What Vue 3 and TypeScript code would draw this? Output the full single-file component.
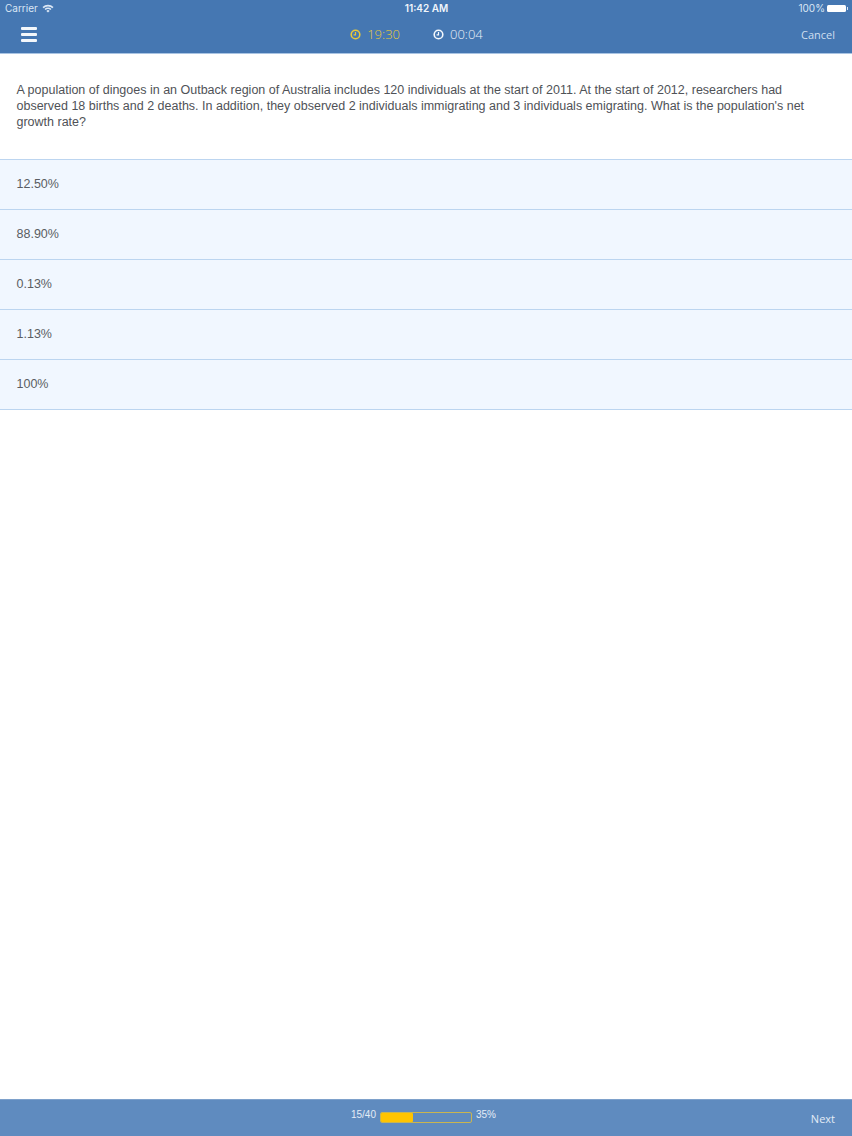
<script setup lang="ts">
const options: string[] = ['12.50%', '88.90%', '0.13%', '1.13%', '100%']
const progress = 35
</script>

<template>
  <div class="page">
    <header class="top">
      <div class="status">
        <div class="status-left">
          <span>Carrier</span>
          <svg class="wifi" width="12" height="9" viewBox="0 0 12 9">
            <path d="M0.5 3 A8 8 0 0 1 11.5 3 L10.4 4.2 A6.4 6.4 0 0 0 1.6 4.2 Z" fill="#dbe7f5" />
            <path d="M2.5 5 A5 5 0 0 1 9.5 5 L8.4 6.1 A3.4 3.4 0 0 0 3.6 6.1 Z" fill="#dbe7f5" />
            <path d="M4.4 6.9 A2.2 2.2 0 0 1 7.6 6.9 L6 8.6 Z" fill="#dbe7f5" />
          </svg>
        </div>
        <div class="clock">11:42 AM</div>
        <div class="status-right">
          <span>100%</span>
          <span class="battery"><span class="battery-cap"></span></span>
        </div>
      </div>
      <nav class="nav">
        <div class="menu"><span></span><span></span><span></span></div>
        <div class="timers">
          <div class="timer timer-gold">
            <svg width="11" height="11" viewBox="0 0 11 11">
              <circle cx="5.5" cy="5.5" r="4.3" fill="none" stroke="currentColor" stroke-width="1.6" />
              <path d="M5.5 3 V5.8 H3.6" fill="none" stroke="currentColor" stroke-width="1.2" />
            </svg>
            <span>19:30</span>
          </div>
          <div class="timer timer-white">
            <svg width="11" height="11" viewBox="0 0 11 11">
              <circle cx="5.5" cy="5.5" r="4.3" fill="none" stroke="#f4f8fc" stroke-width="1.6" />
              <path d="M5.5 3 V5.8 H3.6" fill="none" stroke="#f4f8fc" stroke-width="1.2" />
            </svg>
            <span>00:04</span>
          </div>
        </div>
        <div class="cancel">Cancel</div>
      </nav>
    </header>

    <main class="main">
      <p class="question">
        A population of dingoes in an Outback region of Australia includes 120 individuals at the start of 2011. At the start of 2012, researchers had observed 18 births and 2 deaths. In addition, they observed 2 individuals immigrating and 3 individuals emigrating. What is the population's net growth rate?
      </p>
      <ul class="options">
        <li v-for="o in options" :key="o" class="option">{{ o }}</li>
      </ul>
    </main>

    <footer class="bottom">
      <div class="progress">
        <span class="count">15/40</span>
        <div class="bar"><div class="fill" :style="{ width: progress + '%' }"></div></div>
        <span class="count">35%</span>
      </div>
      <div class="next">Next</div>
    </footer>
  </div>
</template>

<style>
body { margin: 0; background: #fff; }
</style>

<style scoped>
.page {
  width: 852px;
  height: 1136px;
  display: flex;
  flex-direction: column;
  font-family: "Liberation Sans", Arial, sans-serif;
  overflow: hidden;
  background: #fff;
}
.top {
  height: 53px;
  background: #4577b2;
  border-bottom: 1px solid #a9c4e3;
  box-sizing: content-box;
  display: flex;
  flex-direction: column;
}
.status {
  height: 16px;
  display: grid;
  grid-template-columns: 1fr auto 1fr;
  align-items: center;
  padding: 0 4px 0 5px;
  font-size: 10px;
  color: #dbe7f5;
  font-family: Inter, "Liberation Sans", sans-serif;
}
.status-left { display: flex; align-items: center; gap: 4px; }
.wifi { display: block; }
.clock { font-weight: 600; color: #f0f5fb; }
.status-right { display: flex; align-items: center; justify-content: flex-end; gap: 2px; }
.battery {
  position: relative;
  width: 19px;
  height: 7px;
  background: #fff;
  border-radius: 1.5px;
  margin-right: 2px;
}
.battery-cap {
  position: absolute;
  right: -2px;
  top: 2px;
  width: 1px;
  height: 3px;
  background: #dbe7f5;
}
.nav {
  position: relative;
  flex: 1;
  display: flex;
  align-items: center;
  justify-content: space-between;
  padding: 1px 17px 2px 21px;
}
.menu { width: 16px; display: flex; flex-direction: column; gap: 3px; }
.menu span { display: block; height: 3px; background: #f3f7fb; border-radius: 1px; }
.timers { display: flex; gap: 33px; margin-left: -5px; }
.timer {
  display: flex;
  align-items: center;
  gap: 6px;
  font-family: "Open Sans", "Liberation Sans", sans-serif;
  font-size: 13px;
  font-weight: 300;
}
.timer svg { display: block; }
.timer-gold { color: #e8c938; }
.timer-white { color: #eaf1f9; }
.cancel {
  font-family: "Open Sans", "Liberation Sans", sans-serif;
  font-size: 11px;
  color: #cfdff0;
}
.main { flex: 1; }
.question {
  margin: 0;
  padding: 28px 42px 30px 16.5px;
  height: 48px;
  box-sizing: content-box;
  font-size: 12.5px;
  line-height: 16px;
  color: #4f5257;
}
.options { list-style: none; margin: 0; padding: 0; border-top: 1px solid #bcd5f0; margin-top: -1px; }
.option {
  border-bottom: 1px solid #bcd5f0;
  background: #f1f7ff;
  padding: 0 0 2px 16.5px;
  box-sizing: border-box;
  height: 50px;
  display: flex;
  align-items: center;
  font-size: 12.5px;
  color: #5a5d62;
}
.bottom {
  position: relative;
  height: 36px;
  background: #5f8bbf;
  border-top: 1px solid #7ea1cb;
  display: flex;
  justify-content: center;
}
.progress {
  display: flex;
  align-items: flex-start;
  gap: 4px;
  padding-top: 9px;
  margin-left: -5px;
  font-size: 10px;
  color: #e3ecf6;
}
.count { line-height: 12px; }
.bar {
  width: 90px;
  height: 9px;
  margin-top: 3px;
  border: 1px solid #c9b550;
  border-radius: 2px;
}
.fill { height: 100%; background: #ffc400; border-radius: 1px; }
.next {
  position: absolute;
  right: 17px;
  top: 11px;
  font-family: "Open Sans", "Liberation Sans", sans-serif;
  font-size: 11px;
  color: #e3ecf6;
}
</style>
